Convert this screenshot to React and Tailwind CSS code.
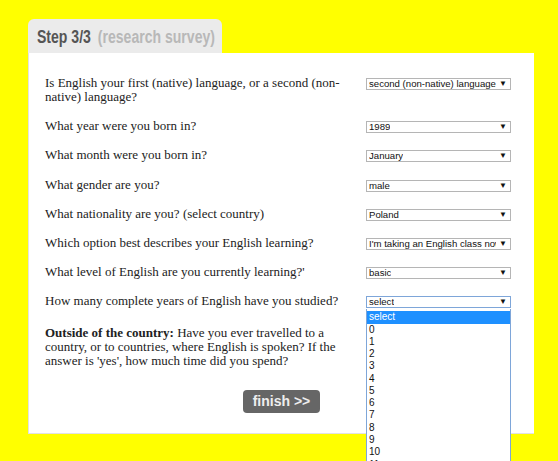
import React from 'react';

const questions = [
  { text: 'Is English your first (native) language, or a second (non-native) language?', value: 'second (non-native) language' },
  { text: 'What year were you born in?', value: '1989' },
  { text: 'What month were you born in?', value: 'January' },
  { text: 'What gender are you?', value: 'male' },
  { text: 'What nationality are you? (select country)', value: 'Poland' },
  { text: 'Which option best describes your English learning?', value: "I'm taking an English class now" },
  { text: "What level of English are you currently learning?'", value: 'basic' },
  { text: 'How many complete years of English have you studied?', value: 'select', open: true },
];

const yearOptions = ['select', '0', '1', '2', '3', '4', '5', '6', '7', '8', '9', '10', '11', '12'];

const FakeSelect = ({ value, open }) => {
  return (
    <div className="relative mt-[2px] w-[145px]">
      <div
        className={`flex h-[12px] items-center justify-between overflow-hidden border bg-white pl-[2px] pr-[3px] text-[9.6px] leading-[10px] text-[#111] ${
          open ? 'border-[#7ea6d9]' : 'border-[#b5b5b5]'
        }`}
        style={{ fontFamily: '"Liberation Sans", Arial, sans-serif' }}
      >
        <span className="overflow-hidden whitespace-nowrap">{value}</span>
        <span className="ml-[3px] shrink-0 text-[8px] leading-[8px]">▼</span>
      </div>
      {open && (
        <ul
          className="absolute left-0 top-[13px] z-10 w-[145px] border border-t-0 border-[#7ea6d9] bg-white pt-[2px] text-[10px] text-[#111]"
          style={{ fontFamily: '"Liberation Sans", Arial, sans-serif' }}
        >
          {yearOptions.map((opt, i) => (
            <li
              key={opt}
              className={`h-[12.27px] pl-[2px] leading-[12.27px] ${i === 0 ? 'bg-[#1e90ff] text-white' : ''}`}
            >
              {opt}
            </li>
          ))}
        </ul>
      )}
    </div>
  );
};

const App = () => {
  return (
    <div className="h-[461px] w-full overflow-hidden bg-[#ffff00] pl-[28px] pt-[19px]">
      <div className="w-[506px]">
        <div className="flex h-[34px] w-[194px] items-center rounded-t-[6px] bg-[#ebebeb] pl-[9px] pt-[2px]">
          <div
            className="origin-left scale-x-[0.78] whitespace-nowrap text-[18px] font-bold"
            style={{ fontFamily: '"Liberation Sans", Arial, sans-serif' }}
          >
            <span className="text-[#555555]">Step 3/3</span>
            <span className="ml-[9px] text-[#b8b8b8]">(research survey)</span>
          </div>
        </div>
        <div
          className="h-[381px] border-b border-l border-[#e2e2e2] bg-white pl-[16px] pt-[23px] text-[13px] leading-[14px] text-[#222]"
          style={{ fontFamily: '"Liberation Serif", "Times New Roman", serif' }}
        >
          {questions.map((q, i) => (
            <div key={i} className="flex pb-[15.2px]">
              <div className="w-[305px]">{q.text}</div>
              <div className="ml-[16px]">
                <FakeSelect value={q.value} open={q.open} />
              </div>
            </div>
          ))}
          <div className="w-[305px] pt-[2px]">
            <b>Outside of the country:</b> Have you ever travelled to a country, or to countries, where English is spoken? If the answer is 'yes', how much time did you spend?
          </div>
          <div className="flex justify-center pr-[16px] pt-[22px]">
            <button
              className="h-[23px] w-[77px] rounded-[4px] bg-[#666666] text-[14px] font-bold text-[#eeeeee]"
              style={{ fontFamily: '"Liberation Sans", Arial, sans-serif' }}
            >
              finish &gt;&gt;
            </button>
          </div>
        </div>
      </div>
    </div>
  );
};

export default App;
